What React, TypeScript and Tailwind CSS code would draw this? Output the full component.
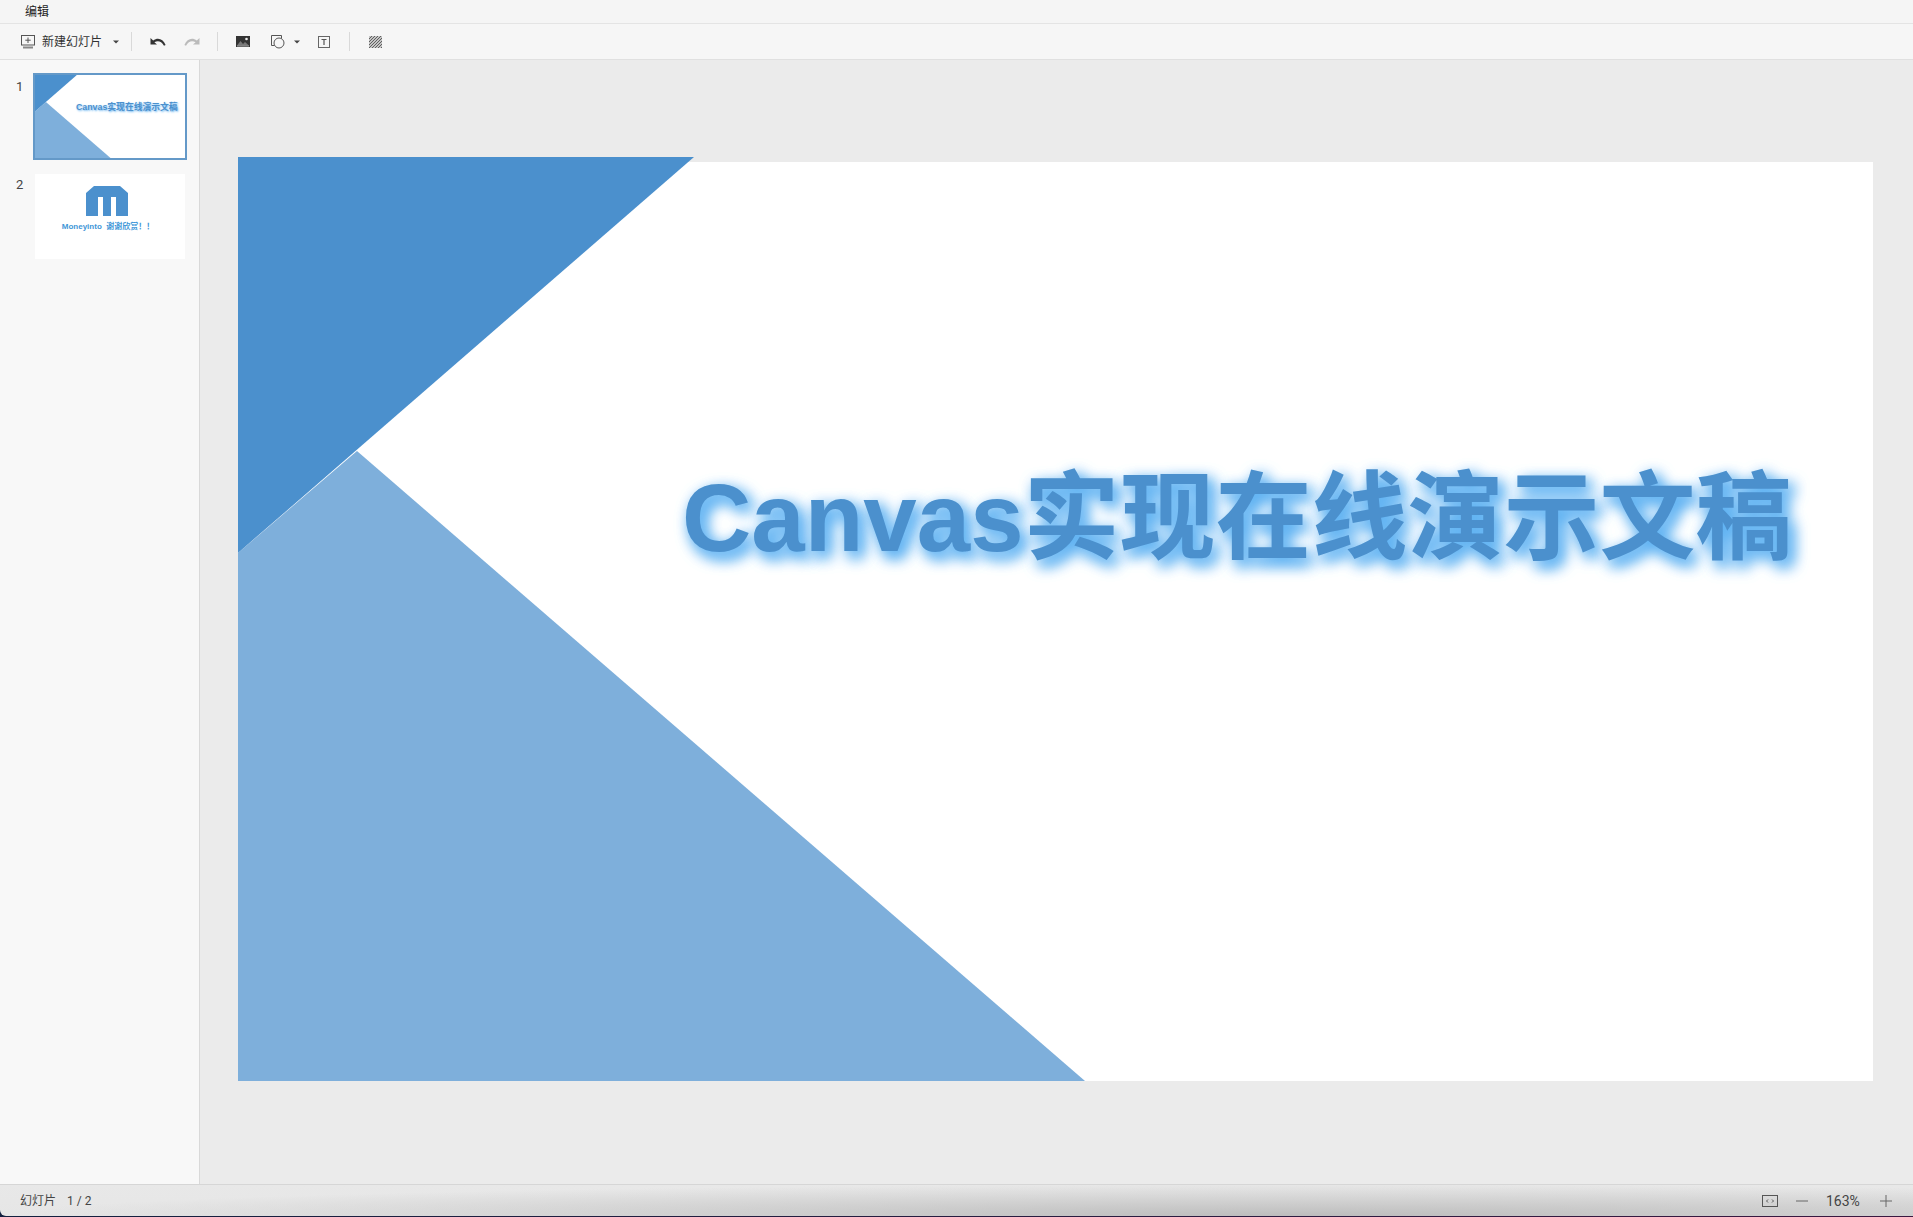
import React from "react";

const CJK = '"Liberation Sans","Noto Sans CJK SC",sans-serif';

function Caret() {
  return <svg width="6" height="4" viewBox="0 0 6 4"><path d="M0 0.5h6L3 3.5z" fill="#444" /></svg>;
}
function Sep() {
  return <div className="w-px h-[19px] bg-[#d9d9d9]" />;
}
function NewSlideIcon() {
  return (
    <svg width="17" height="16" viewBox="0 0 17 16" fill="none" stroke="#555" strokeWidth="1">
      <rect x="1.500" y="1.500" width="13" height="9.500" />
      <path d="M8 3.500v5.500M5.300 6.200h5.400" />
      <path d="M3 13.500h10" strokeWidth="2" stroke="#888" />
    </svg>
  );
}
function Undo({ color }: { color: string }) {
  return (
    <svg width="16" height="10" viewBox="0 0 16 10">
      <path d="M0.500 1v6.500h6.500L4.400 5.200C7.600 3.200 11.400 3.800 14 8.800l1.600-.8C13 1.400 7.600 0.200 3.200 3.400z" fill={color} />
    </svg>
  );
}
function Img() {
  return (
    <svg width="14" height="11" viewBox="0 0 14 11">
      <rect width="14" height="11" fill="#333" />
      <path d="M1 9.500l3.500-4.500 2.500 3 2-2 4 3.500z" fill="#777" />
      <circle cx="10.500" cy="3" r="1.300" fill="#eee" />
      <path d="M1 10h12" stroke="#eee" strokeWidth="0.600" />
    </svg>
  );
}
function ShapeIcon() {
  return (
    <svg width="14" height="14" viewBox="0 0 14 14" fill="none" stroke="#555" strokeWidth="1">
      <path d="M3.500 10.500H0.500V0.500H10.500V3.500" />
      <circle cx="8" cy="8" r="5" fill="#f6f6f6" />
    </svg>
  );
}
function TextIcon() {
  return (
    <svg width="12" height="12" viewBox="0 0 12 12" fill="none">
      <rect x="0.500" y="0.500" width="11" height="11" stroke="#666" />
      <path d="M3.500 3.500h5M6 3.500v5.500" stroke="#555" strokeWidth="1.200" />
    </svg>
  );
}
function Hatch() {
  return (
    <svg width="13" height="12" viewBox="0 0 13 12">
      <rect width="13" height="12" fill="#c4c4c4" />
      <path d="M-1 4L4-1M-1 7L7-1M-1 10L10-1M-1 13L13-1M2 13L14 1M5 13L14 4M8 13L14 7M11 13L14 10" stroke="#555" strokeWidth="0.900" />
    </svg>
  );
}
function Logo() {
  return (
    <svg width="42" height="30" viewBox="0 0 42 30">
      <path d="M8 0H34L42 7V30H30V11H25V30H17V11H12V30H0V7z" fill="#4b90cd" />
    </svg>
  );
}
function SlideArt({ full }: { full?: boolean }) {
  return (
    <svg viewBox="0 -5 1635 924" width={full ? 1635 : 150} height={full ? 924 : 85} className="block">
      <path d="M0 391L119 289 847 919H0z" fill="#7eafdb" />
      <path d="M0 -5H456L0 391z" fill="#4b90cd" />
    </svg>
  );
}

export default function App() {
  return (
    <div className="w-[1913px] h-[1217px] flex flex-col overflow-hidden bg-[linear-gradient(90deg,#12203f,#2a1c40_60%,#3a1840)] text-[#333]" style={{ fontFamily: CJK }}>
      <div className="h-6 shrink-0 flex items-center pl-[25px] bg-[#f5f5f5] border-b border-[#e4e4e4] text-[12px] leading-none text-[#222]">编辑</div>
      <div className="h-[36px] shrink-0 flex items-center pl-[20px] bg-[#f6f6f6] border-b border-[#e0e0e0] text-[12px] text-[#333]">
        <div className="flex items-center w-[17px]"><NewSlideIcon /></div>
        <span className="ml-[5px] w-[62px] leading-none">新建幻灯片</span>
        <div className="ml-[9px] flex"><Caret /></div>
        <div className="ml-[12px]"><Sep /></div>
        <div className="ml-[18px] flex"><Undo color="#333" /></div>
        <div className="ml-[18px] flex -scale-x-100"><Undo color="#bbb" /></div>
        <div className="ml-[17px]"><Sep /></div>
        <div className="ml-[18px] flex"><Img /></div>
        <div className="ml-[21px] flex"><ShapeIcon /></div>
        <div className="ml-[9px] flex"><Caret /></div>
        <div className="ml-[18px] flex"><TextIcon /></div>
        <div className="ml-[19px]"><Sep /></div>
        <div className="ml-[19px] flex"><Hatch /></div>
      </div>
      <div className="flex-1 flex min-h-0">
        <aside className="w-[200px] shrink-0 bg-[#f8f8f8] border-r border-[#d9d9d9] pt-[13px] flex flex-col gap-[14px]">
          <div className="flex">
            <div className="w-[33px] pl-[16px] pt-[4px] text-[13px] leading-[20px] text-[#444]" style={{ fontFamily: "Roboto,sans-serif" }}>1</div>
            <div className="w-[154px] h-[87px] border-[2px] border-[#6499c8] bg-white overflow-hidden relative">
              <SlideArt />
              <span className="absolute left-[41px] top-[28px] text-[8.800px] leading-none font-bold whitespace-nowrap text-[#4b90cd] [text-shadow:1px_1px_2px_#6ab4f0]">Canvas实现在线演示文稿</span>
            </div>
          </div>
          <div className="flex">
            <div className="w-[33px] pl-[16px] pt-[1px] text-[13px] leading-[20px] text-[#444]" style={{ fontFamily: "Roboto,sans-serif" }}>2</div>
            <div className="ml-[2px] w-[150px] h-[85px] bg-white flex flex-col items-center pt-[12px]">
              <div className="-ml-[6px] flex"><Logo /></div>
              <div className="-ml-[4px] mt-[7px] text-[8px] leading-none font-bold whitespace-pre text-[#3f97d8]">Moneyinto  谢谢欣赏！！</div>
            </div>
          </div>
        </aside>
        <main className="flex-1 bg-[#ebebeb] pl-[38px] pt-[97px]">
          <div className="relative w-[1635px] h-[924px]">
            <div className="absolute left-0 right-0 top-[5px] bottom-0 bg-white" />
            <div className="absolute inset-0"><SlideArt full /></div>
            <div className="absolute left-[444px] top-[306px] text-[96px] leading-[110px] font-bold whitespace-nowrap text-[#4b90cd] [text-shadow:5px_6px_15px_#5fb2f2,5px_6px_15px_#5fb2f2]">Canvas实现在线演示文稿</div>
          </div>
        </main>
      </div>
      <div className="h-[32px] shrink-0 mb-px flex items-center pl-[20px] pr-[21px] rounded-bl-[6px] border-t border-[#d6d6d6] bg-[linear-gradient(#e8e8e8,#e6e6e6)] relative overflow-hidden text-[12px] text-[#444]">
        <div className="absolute inset-0 bg-[radial-gradient(ellipse_1300px_32px_at_1300px_100%,#bdbdbd,transparent)]" />
        <span className="relative leading-none">幻灯片</span>
        <span className="relative ml-[11px] leading-none" style={{ fontFamily: "Roboto,sans-serif" }}>1 / 2</span>
        <div className="relative ml-auto flex items-center text-[#444]">
          <svg width="16" height="12" viewBox="0 0 16 12" fill="none">
            <rect x="0.500" y="0.500" width="15" height="11" stroke="#555" />
            <path d="M6 4.500L4.500 6 6 7.500M10 4.500L11.500 6 10 7.500" stroke="#555" />
          </svg>
          <svg className="ml-[18px]" width="12" height="2" viewBox="0 0 12 2"><path d="M0 1h12" stroke="#666" /></svg>
          <span className="ml-[18px] text-[14px] leading-none w-[36px]" style={{ fontFamily: "Roboto,sans-serif" }}>163%</span>
          <svg className="ml-[18px]" width="12" height="12" viewBox="0 0 12 12"><path d="M0 6h12M6 0v12" stroke="#666" /></svg>
        </div>
      </div>
    </div>
  );
}
